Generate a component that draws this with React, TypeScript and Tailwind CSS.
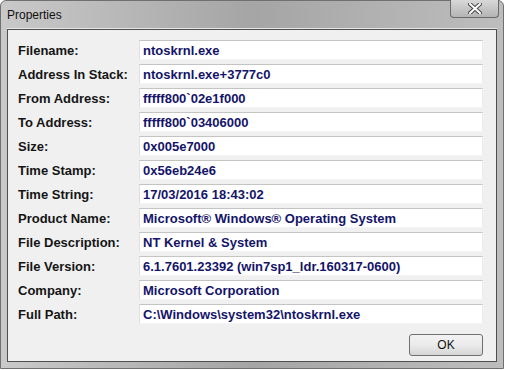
import { ReactNode } from "react";

const rows: [string, string][] = [
  ["Filename:", "ntoskrnl.exe"],
  ["Address In Stack:", "ntoskrnl.exe+3777c0"],
  ["From Address:", "fffff800`02e1f000"],
  ["To Address:", "fffff800`03406000"],
  ["Size:", "0x005e7000"],
  ["Time Stamp:", "0x56eb24e6"],
  ["Time String:", "17/03/2016 18:43:02"],
  ["Product Name:", "Microsoft® Windows® Operating System"],
  ["File Description:", "NT Kernel & System"],
  ["File Version:", "6.1.7601.23392 (win7sp1_ldr.160317-0600)"],
  ["Company:", "Microsoft Corporation"],
  ["Full Path:", "C:\\Windows\\system32\\ntoskrnl.exe"],
];

function Field({ label, children }: { label: string; children: ReactNode }) {
  return (
    <div className="flex items-center h-[20px]">
      <div className="w-[121px] shrink-0 text-[13px] font-bold text-[#151515] leading-none">{label}</div>
      <div className="flex-1 h-[20px] bg-white border-t border-t-[#c4c4c4] border-l border-l-[#e0e0e0] border-r border-r-[#ececec] border-b border-b-[#f4f4f4] flex items-center pl-[3px] text-[13px] font-bold text-[#14146a] leading-none whitespace-nowrap">
        {children}
      </div>
    </div>
  );
}

export default function App() {
  return (
    <div
      className="w-[506px] h-[370px] bg-white relative overflow-hidden"
      style={{ fontFamily: '"Liberation Sans", Arial, sans-serif' }}
    >
      <div className="w-[504px] h-[369px] rounded-t-[6px] bg-gradient-to-r from-[#c9c9c9] via-[#a5a5a5] to-[#bdbdbd] border border-[#707070] flex flex-col">
        {/* title bar */}
        <div className="h-[27px] shrink-0 flex items-center pl-[6px] relative">
          <span className="text-[12px] text-[#111] mt-[1px]">Properties</span>
          <div className="absolute right-[4px] top-[-1px] w-[49px] h-[18px] rounded-b-[4px] border border-[#6a6a6a] border-t-0 bg-gradient-to-b from-[#d8d8d8] to-[#b4b4b4] flex items-center justify-center">
            <svg width="14" height="11" viewBox="0 0 14 11">
              <path d="M2 1 L12 10 M12 1 L2 10" stroke="#4a4a4a" strokeWidth="4" strokeLinecap="square" />
              <path d="M2 1 L12 10 M12 1 L2 10" stroke="#ffffff" strokeWidth="2" strokeLinecap="square" />
            </svg>
          </div>
        </div>
        <div className="h-[1px] bg-[#e6e6e6] mx-[6px]" />
        {/* client */}
        <div className="flex-1 ml-[6px] mr-[6px] mb-[6px] bg-[#f0f0f0] border border-[#4f4f4f] pt-[10px] pl-[10px] pr-[13px] flex flex-col">
          <div className="flex flex-col gap-[4px]">
            {rows.map(([label, value]) => (
              <Field key={label} label={label}>
                {value}
              </Field>
            ))}
          </div>
          <div className="flex justify-end mt-[10px]">
            <button className="w-[74px] h-[22px] rounded-[3px] border border-[#707070] bg-gradient-to-b from-[#f2f2f2] via-[#ebebeb] to-[#d5d5d5] text-[12px] text-[#111] leading-none">
              OK
            </button>
          </div>
        </div>
      </div>
    </div>
  );
}
